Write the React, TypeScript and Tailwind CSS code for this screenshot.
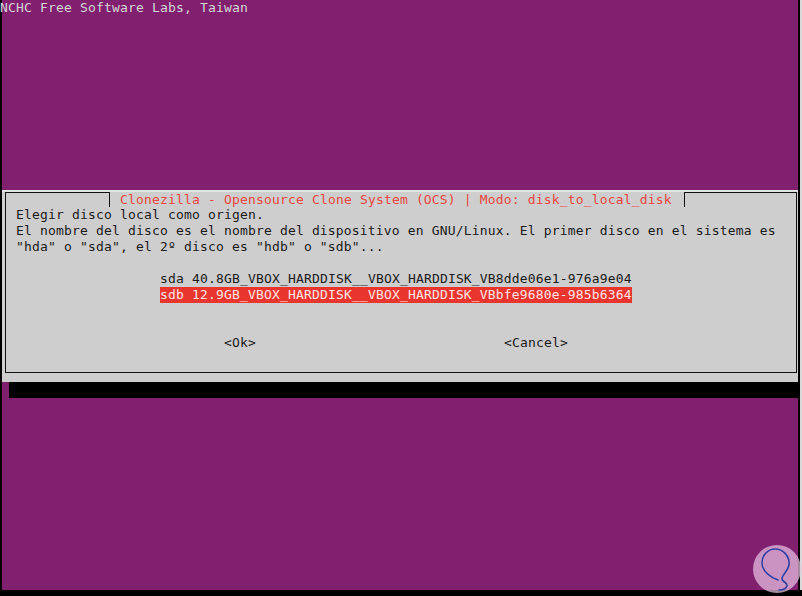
import React from 'react'

const mono = "font-['DejaVu_Sans_Mono',monospace] text-[13px] tracking-[0.17px]"

const Row: React.FC<{ children?: React.ReactNode; className?: string }> = ({
  children,
  className = '',
}) => (
  <div className={`h-[16px] leading-[16px] whitespace-pre ${className}`}>
    {children}
  </div>
)

const Watermark = () => (
  <svg
    width="50"
    height="50"
    viewBox="0 0 50 50"
    className="absolute left-[752px] top-[544px]"
  >
    <circle cx="25" cy="25" r="24" fill="#e6bfe0" fillOpacity="0.72" />
    <path
      d="M26 36 C20 34 10 28 10 19 C10 10 17 5 23 5 C31 5 38 12 37 21 C36 27 31 30 30 34 C29 38 36 38 35 42 C34 45 30 46 27 46"
      fill="none"
      stroke="#3140a3"
      strokeWidth="1.6"
      strokeLinecap="round"
    />
  </svg>
)

const App: React.FC = () => {
  return (
    <div className={`relative w-[802px] h-[596px] overflow-hidden bg-black flex flex-col ${mono}`}>
      <div className="flex h-[590px]">
        {/* terminal */}
        <div className="w-[798px] h-full bg-[#80206f] border-l-2 border-black flex flex-col">
          <Row className="text-[#d6d6d6] -ml-[2px]">NCHC Free Software Labs, Taiwan</Row>

          {/* dialog */}
          <div className="mt-[174px] h-[192px] bg-[#cecece] border-t-2 border-[#e2e2e2] pl-[3px] pr-[1px] pb-[9px]">
            <div className="h-[181px] border-l border-r border-b border-[#111] flex flex-col text-[#1a1a1a]">
              <div className="h-[15px] flex">
                <div className="w-[103px] border-t border-[#111]" />
                <div className="h-[15px] border-l border-r border-[#111] pl-[10px] pr-[12px] leading-[16px] text-[#e8463f] whitespace-pre">
                  Clonezilla - Opensource Clone System (OCS) | Modo: disk_to_local_disk
                </div>
                <div className="flex-1 border-t border-[#111]" />
              </div>

              <div className="pl-[10px] flex flex-col">
                <Row>Elegir disco local como origen.</Row>
                <Row>El nombre del disco es el nombre del dispositivo en GNU/Linux. El primer disco en el sistema es</Row>
                <Row>"hda" o "sda", el 2º disco es "hdb" o "sdb"...</Row>
                <Row />
                <Row className="ml-[144px]">sda 40.8GB_VBOX_HARDDISK__VBOX_HARDDISK_VB8dde06e1-976a9e04</Row>
                <Row className="ml-[144px]">
                  <span className="block w-fit h-[16px] leading-[15px] bg-[#e8362f] text-[#fde4e2]">
                    sdb 12.9GB_VBOX_HARDDISK__VBOX_HARDDISK_VBbfe9680e-985b6364
                  </span>
                </Row>
                <Row />
                <Row />
                <Row className="flex">
                  <span className="ml-[208px]">&lt;Ok&gt;</span>
                  <span className="ml-[248px]">&lt;Cancel&gt;</span>
                </Row>
              </div>
            </div>
          </div>

          {/* dialog shadow */}
          <div className="h-[16px] ml-[7px] bg-black" />
        </div>
        <div className="w-[2px] bg-black" />
        <div className="w-[2px] bg-[#d9d9d9]" />
      </div>
      <div className="h-[6px] bg-black" />
      <Watermark />
    </div>
  )
}

export default App
